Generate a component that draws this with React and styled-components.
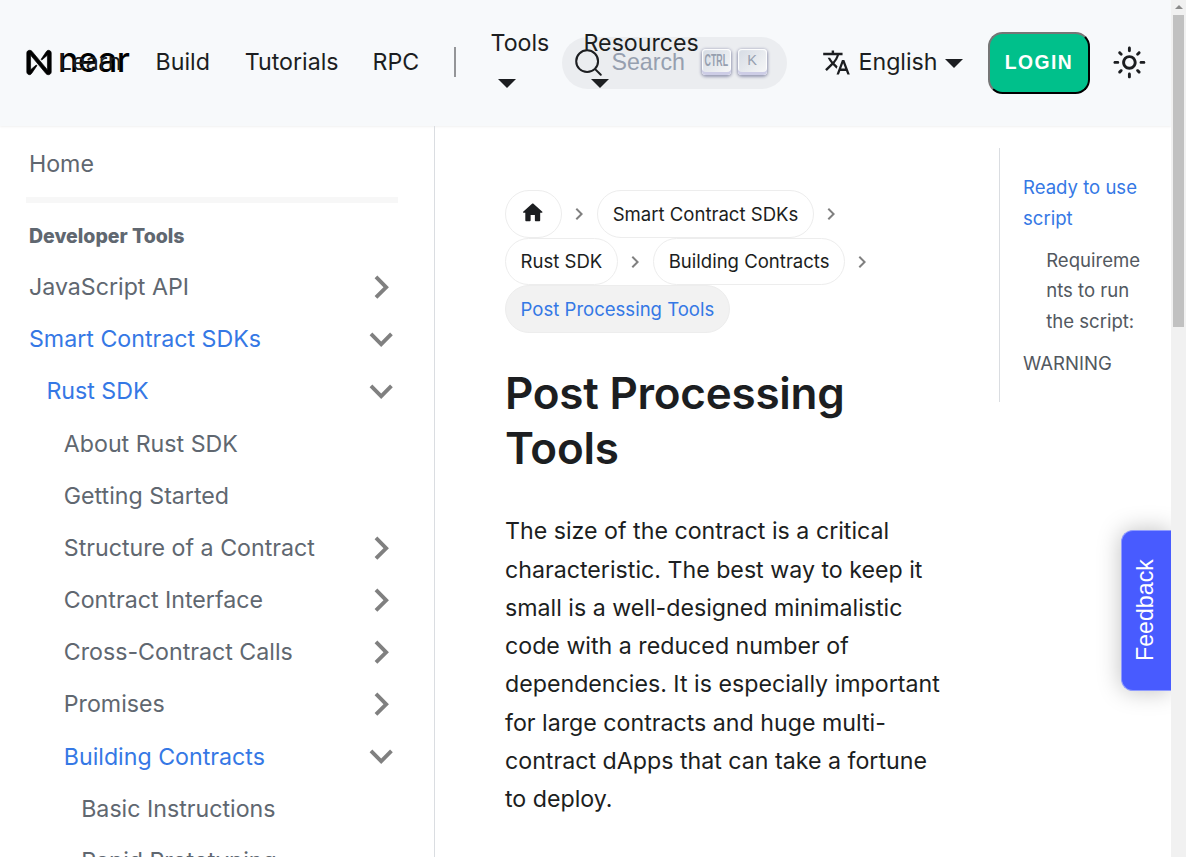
import React from "react";
import styled, { createGlobalStyle } from "styled-components";

const Global = createGlobalStyle`
  * { box-sizing: border-box; }
  html, body { margin: 0; height: 857px; overflow: hidden; background: #fff; }
  body { font-family: Inter, "Liberation Sans", sans-serif; font-size: 23.2px; line-height: 1.65; color: #1c1e21; }
`;

const Window = styled.div`
  display: grid;
  grid-template-columns: 1171px 15px;
  height: 857px;
  overflow: hidden;
`;
const Page = styled.div`
  display: flex;
  flex-direction: column;
  height: 857px;
  overflow: hidden;
  position: relative;
`;

/* Navigation bar */
const Navbar = styled.header`
  display: flex;
  flex: none;
  align-items: center;
  height: 126px;
  padding: 0 16px 0 26px;
  background: #f7f9fb;
  box-shadow: 0 1px 2px rgba(0, 0, 0, 0.06);
  line-height: 38px;
`;
const NavLeft = styled.nav`
  display: flex;
  align-items: center;
  flex: 1 1 0;
  min-width: 0;
`;
const Brand = styled.div`
  display: flex;
  align-items: center;
  flex: none;
  width: 15.6px;
  margin-bottom: 2px;
  white-space: nowrap;
  color: #000;
`;
const BrandMark = styled.svg`
  flex: none;
  width: 26px;
  height: 27px;
`;
const BrandName = styled.span`
  margin: -5px 0 0 6px;
  font-size: 34px;
  font-weight: 500;
  line-height: 36px;
  letter-spacing: -0.4px;
`;
const NavItem = styled.a`
  flex: none;
  width: ${(p) => p.$w}px;
  padding: 0 0 2px 17.2px;
  white-space: nowrap;
`;
const Divider = styled.span`
  flex: none;
  width: 2px;
  height: 30px;
  margin: 0 17.4px 2px;
  background: #949598;
`;
const NavDropdown = styled(NavItem)`
  display: flex;
  flex-direction: column;
  height: 77px;
  padding-bottom: 0;
  margin-bottom: 2px;
  position: relative;
  z-index: 1;
`;
const Caret = styled.i`
  display: block;
  width: 0;
  height: 0;
  border: 9px solid transparent;
  border-top-color: #1c1e21;
  border-bottom: 0;
  margin: ${(p) => p.$m || "0"};
`;
const NavRight = styled.div`
  display: flex;
  align-items: center;
  flex: none;
  width: 593px;
`;
const Search = styled.div`
  display: flex;
  align-items: center;
  flex: none;
  width: 225px;
  height: 52px;
  padding: 0 0 2px 12px;
  border-radius: 26px;
  background: #ebedf0;
  color: #969faf;
  font-family: "Liberation Sans", Arial, sans-serif;
`;
const SearchLabel = styled.span`
  width: 99px;
  padding: 0 0 0 8.5px;
`;
const Key = styled.kbd`
  display: flex;
  justify-content: center;
  align-items: center;
  width: 29px;
  height: 26px;
  margin: -1px 6.5px 0 0;
  padding-bottom: ${(p) => (p.$small ? 2 : 4)}px;
  border-radius: 4px;
  background: linear-gradient(-225deg, #d5dbe4, #f8f8f8);
  box-shadow: inset 0 -3px 0 0 #cdcde6, inset 0 0 1px 1px #fff, 0 1px 3px 1px rgba(30, 35, 90, 0.4);
  font: ${(p) => (p.$small ? "bold 16px" : "14.5px")} "Liberation Sans", Arial, sans-serif;
  span { transform: ${(p) => (p.$small ? "scaleX(0.55)" : "none")}; }
`;
const Language = styled.a`
  display: flex;
  align-items: center;
  width: 140px;
  margin: 0 0 2px 35px;
  white-space: nowrap;
  svg { flex: none; margin-right: 7.5px; }
`;
const Login = styled.button`
  width: 102px;
  height: 62px;
  margin-left: 26px;
  padding: 0;
  border: 2px outset #1c1e21;
  border-color: #767676 #1c1e21 #1c1e21 #767676;
  border-radius: 14.5px;
  background: #00c08b;
  color: #fff;
  font: bold 19.3px "Liberation Sans", Arial, sans-serif;
  letter-spacing: 1.5px;
`;
const ThemeToggle = styled.div`
  display: flex;
  margin: 0 0 2px 22px;
`;

/* Page body */
const Body = styled.div`
  display: flex;
  flex: 1;
  min-height: 0;
`;
const Sidebar = styled.aside`
  flex: none;
  width: 435px;
  padding: 15px 36px 0 11.6px;
  border-right: 1px solid #dadde1;
  overflow: hidden;
  color: #606770;
`;
const SideItem = styled.a`
  display: flex;
  align-items: center;
  justify-content: space-between;
  height: 46.4px;
  margin-bottom: 5.8px;
  padding-left: ${(p) => 17.4 + p.$level * 17.4}px;
  line-height: 29px;
  white-space: nowrap;
  color: ${(p) => (p.$active ? "#3578e5" : "#606770")};
  svg { flex: none; margin: -1px -6.4px 0 0; }
`;
const Rule = styled.hr`
  height: 6px;
  margin: 10px 0 11px 14.4px;
  border: 0;
  background: #f7f7f7;
`;
const SideTitle = styled.div`
  height: 44px;
  margin-bottom: 5.9px;
  padding-left: 17.4px;
  font-size: 19.5px;
  font-weight: 800;
  line-height: 44px;
`;
const Article = styled.main`
  flex: none;
  width: 564px;
  padding: 64px 58px 0 70px;
`;
const Crumbs = styled.ul`
  display: flex;
  flex-wrap: wrap;
  margin: 0 0 33px;
  padding: 0;
  list-style: none;
`;
const Crumb = styled.li`
  display: flex;
  align-items: center;
  height: 47.5px;
  font-size: 18.56px;
  line-height: 30px;
  white-space: nowrap;
`;
const Pill = styled.a`
  display: flex;
  align-items: center;
  height: 47.5px;
  padding: 0 14.6px;
  border: 1px solid #ededed;
  border-radius: 24px;
  background: ${(p) => (p.$active ? "#f2f2f2" : "#fff")};
  color: ${(p) => (p.$active ? "#3578e5" : "#1c1e21")};
  svg { margin: 0 0.7px 2px -0.5px; }
`;
const Gap = styled.span`
  display: flex;
  margin: 1px 6.2px 0 5px;
`;
const Title = styled.h1`
  margin: 0 0 36.8px;
  font-size: 44px;
  font-weight: 600;
  line-height: 55px;
  letter-spacing: -0.25px;
`;
const Paragraph = styled.p`
  margin: 0;
  line-height: 38.3px;
`;
const Toc = styled.aside`
  flex: none;
  width: 172px;
  height: 254px;
  margin-top: 22px;
  padding: 24px 0 0 23px;
  border-left: 1px solid #dadde1;
  font-size: 18.56px;
  line-height: 30.6px;
`;
const TocLink = styled.a`
  display: block;
  width: ${(p) => (p.$nested ? 96 : 130)}px;
  margin: 0 0 11.6px ${(p) => (p.$nested ? 23.2 : 0)}px;
  overflow-wrap: anywhere;
  color: ${(p) => (p.$active ? "#3578e5" : "#525860")};
`;
const Feedback = styled.button`
  position: absolute;
  right: 0;
  top: 530px;
  width: 50px;
  height: 161px;
  padding: 0;
  border: 1px solid #8f9bff;
  border-right: 0;
  border-radius: 12px 0 0 12px;
  background: #485bff;
  box-shadow: 0 0 23px rgba(0, 0, 0, 0.25);
  color: #fff;
  font: 23.2px/46px "Liberation Sans", Arial, sans-serif;
  span { display: block; writing-mode: vertical-rl; transform: rotate(180deg); width: 46px; height: 159px; }
`;

const Scrollbar = styled.div`
  display: flex;
  flex-direction: column;
  align-items: center;
  background: #f1f1f1;
`;
const ArrowUp = styled.i`
  width: 0;
  height: 0;
  margin: 5px 0 6px;
  border: 4px solid transparent;
  border-top: 0;
  border-bottom-color: #8b8b8b;
`;
const Thumb = styled.div`
  width: 11px;
  height: 312px;
  background: #c1c1c1;
`;

const Chevron = ({ size, turn }) => (
  <svg width={size} height={size} viewBox="0 0 24 24" fill="#808080">
    <path transform={`rotate(${turn} 12 12)`} d="M7.41 15.41L12 10.83l4.59 4.58L18 14l-6-6-6 6z" />
  </svg>
);

const SIDE = [
  ["JavaScript API", 0, 90],
  ["Smart Contract SDKs", 0, 180, true],
  ["Rust SDK", 1, 180, true],
  ["About Rust SDK", 2],
  ["Getting Started", 2],
  ["Structure of a Contract", 2, 90],
  ["Contract Interface", 2, 90],
  ["Cross-Contract Calls", 2, 90],
  ["Promises", 2, 90],
  ["Building Contracts", 2, 180, true],
  ["Basic Instructions", 3],
  ["Rapid Prototyping", 3],
];

const CRUMBS = ["Smart Contract SDKs", "Rust SDK", "Building Contracts"];

export default function App() {
  return (
    <Window>
      <Global />
      <Page>
        <Navbar>
          <NavLeft>
            <Brand>
              <BrandMark viewBox="-3 -3 96 96">
                <path
                  fill="currentColor"
                  stroke="currentColor"
                  strokeWidth="2.5"
                  d="M72.2 4.6L53.4 32.5c-1.3 1.9 1.2 4.2 3 2.6L74.9 19c.5-.4 1.2-.1 1.2.6v50.3c0 .7-.9 1-1.3.5l-56-67C17 1.2 14.4 0 11.5 0H9.5C4.3 0 0 4.3 0 9.6v70.8C0 85.7 4.3 90 9.6 90c3.3 0 6.4-1.7 8.2-4.6l18.8-27.9c1.3-1.9-1.2-4.2-3-2.6L15.1 71c-.5.4-1.2.1-1.2-.6V20.1c0-.7.9-1 1.3-.5l56 67c1.8 2.2 4.5 3.4 7.3 3.4h2c5.3 0 9.6-4.3 9.6-9.6V9.6C90 4.3 85.7 0 80.4 0c-3.3 0-6.4 1.7-8.2 4.6z"
                />
              </BrandMark>
              <BrandName>near</BrandName>
            </Brand>
            <NavItem $w={96.8}>Learn</NavItem>
            <NavItem $w={89.2}>Build</NavItem>
            <NavItem $w={127.8}>Tutorials</NavItem>
            <NavItem $w={81.2}>RPC</NavItem>
            <Divider />
            <NavDropdown $w={93}>Tools<Caret $m="17px 0 0 7px" /></NavDropdown>
            <NavDropdown $w={150}>Resources<Caret $m="17px 0 0 7px" /></NavDropdown>
          </NavLeft>
          <NavRight>
            <Search>
              <svg width="29" height="29" viewBox="0 0 20 20" fill="none" stroke="#1c1e21" strokeWidth="1.4" strokeLinecap="round" strokeLinejoin="round">
                <path d="M14.386 14.386l4.0877 4.0877-4.0877-4.0877c-2.9418 2.9419-7.7115 2.9419-10.6533 0-2.9419-2.9418-2.9419-7.7115 0-10.6533 2.9418-2.9419 7.7115-2.9419 10.6533 0 2.9419 2.9418 2.9419 7.7115 0 10.6533z" />
              </svg>
              <SearchLabel>Search</SearchLabel>
              <Key $small><span>CTRL</span></Key>
              <Key><span>K</span></Key>
            </Search>
            <Language>
              <svg width="29" height="29" viewBox="0 0 24 24" fill="#1c1e21">
                <path d="M12.87 15.07l-2.54-2.51.03-.03c1.74-1.94 2.98-4.17 3.71-6.53H17V4h-7V2H8v2H1v1.99h11.17C11.5 7.92 10.44 9.75 9 11.35 8.07 10.32 7.3 9.19 6.69 8h-2c.73 1.63 1.73 3.17 2.98 4.56l-5.09 5.02L4 19l5-5 3.11 3.11.76-2.04zM18.5 10h-2L12 22h2l1.12-3h4.75L21 22h2l-4.5-12zm-2.62 7l1.62-4.33L19.12 17h-3.24z" />
              </svg>
              English<Caret $m="3px 0 0 7px" />
            </Language>
            <Login>LOGIN</Login>
            <ThemeToggle>
              <svg width="34.8" height="34.8" viewBox="0 0 24 24" fill="#1c1e21">
                <path d="M12,9c1.65,0,3,1.35,3,3s-1.35,3-3,3s-3-1.35-3-3S10.35,9,12,9 M12,7c-2.76,0-5,2.24-5,5s2.24,5,5,5s5-2.24,5-5 S14.76,7,12,7L12,7z M2,13l2,0c0.55,0,1-0.45,1-1s-0.45-1-1-1l-2,0c-0.55,0-1,0.45-1,1S1.45,13,2,13z M20,13l2,0c0.55,0,1-0.45,1-1 s-0.45-1-1-1l-2,0c-0.55,0-1,0.45-1,1S19.45,13,20,13z M11,2v2c0,0.55,0.45,1,1,1s1-0.45,1-1V2c0-0.55-0.45-1-1-1S11,1.45,11,2z M11,20v2c0,0.55,0.45,1,1,1s1-0.45,1-1v-2c0-0.55-0.45-1-1-1C11.45,19,11,19.45,11,20z M5.99,4.58c-0.39-0.39-1.03-0.39-1.41,0 c-0.39,0.39-0.39,1.03,0,1.41l1.06,1.06c0.39,0.39,1.03,0.39,1.41,0s0.39-1.03,0-1.41L5.99,4.58z M18.36,16.95 c-0.39-0.39-1.03-0.39-1.41,0c-0.39,0.39-0.39,1.03,0,1.41l1.06,1.06c0.39,0.39,1.03,0.39,1.41,0c0.39-0.39,0.39-1.03,0-1.41 L18.36,16.95z M19.42,5.99c0.39-0.39,0.39-1.03,0-1.41c-0.39-0.39-1.03-0.39-1.41,0l-1.06,1.06c-0.39,0.39-0.39,1.03,0,1.41 s1.03,0.39,1.41,0L19.42,5.99z M7.05,18.36c0.39-0.39,0.39-1.03,0-1.41c-0.39-0.39-1.03-0.39-1.41,0l-1.06,1.06 c-0.39,0.39-0.39,1.03,0,1.41s1.03,0.39,1.41,0L7.05,18.36z" />
              </svg>
            </ThemeToggle>
          </NavRight>
        </Navbar>
        <Body>
          <Sidebar>
            <SideItem $level={0}>Home</SideItem>
            <Rule />
            <SideTitle>Developer Tools</SideTitle>
            {SIDE.map(([label, level, turn, active]) => (
              <SideItem key={label} $level={level} $active={active}>
                {label}
                {turn && <Chevron size={46.4} turn={turn} />}
              </SideItem>
            ))}
          </Sidebar>
          <Article>
            <Crumbs>
              <Crumb>
                <Pill>
                  <svg width="25.5" height="25.5" viewBox="0 0 24 24" fill="#1c1e21">
                    <path d="M10 19v-5h4v5c0 .55.45 1 1 1h3c.55 0 1-.45 1-1v-7h1.7c.46 0 .68-.57.33-.87L12.67 3.6c-.38-.34-.96-.34-1.34 0l-8.36 7.53c-.34.3-.13.87.33.87H5v7c0 .55.45 1 1 1h3c.55 0 1-.45 1-1z" />
                  </svg>
                </Pill>
                <Gap><Chevron size={24} turn={90} /></Gap>
              </Crumb>
              {CRUMBS.map((label) => (
                <Crumb key={label}>
                  <Pill>{label}</Pill>
                  <Gap><Chevron size={24} turn={90} /></Gap>
                </Crumb>
              ))}
              <Crumb><Pill $active>Post Processing Tools</Pill></Crumb>
            </Crumbs>
            <Title>Post Processing Tools</Title>
            <Paragraph>
              The size of the contract is a critical characteristic. The best way to keep it small is a well-designed
              minimalistic code with a reduced number of dependencies. It is especially important for large contracts
              and huge multi-contract dApps that can take a fortune to deploy.
            </Paragraph>
          </Article>
          <Toc>
            <TocLink $active>Ready to use script</TocLink>
            <TocLink $nested>Requirements to run the script:</TocLink>
            <TocLink>WARNING</TocLink>
          </Toc>
        </Body>
        <Feedback><span>Feedback</span></Feedback>
      </Page>
      <Scrollbar>
        <ArrowUp />
        <Thumb />
      </Scrollbar>
    </Window>
  );
}
